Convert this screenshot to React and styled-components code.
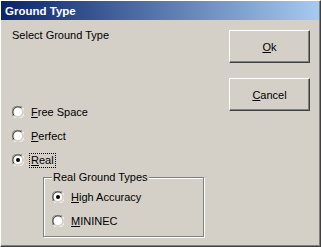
import React from 'react'
import styled, { createGlobalStyle } from 'styled-components'

const GlobalStyle = createGlobalStyle`
  html, body {
    margin: 0;
    padding: 0;
    background: #d4d0c8;
  }
  body {
    font-family: "Liberation Sans", Arial, sans-serif;
    font-size: 11px;
    color: #000;
  }
`

const Window = styled.div`
  width: 321px;
  height: 247px;
  box-sizing: border-box;
  background: #d4d0c8;
  border-top: 1px solid #ffffff;
  border-left: 1px solid #ffffff;
  border-right: 1px solid #404040;
  border-bottom: 1px solid #404040;
  box-shadow: inset -1px -1px 0 #808080;
  display: flex;
  flex-direction: column;
`

const TitleBar = styled.div`
  height: 19px;
  margin-right: 1px;
  background: linear-gradient(to right, #0a246a, #a6caf0);
  color: #fff;
  font-weight: bold;
  font-size: 11.5px;
  line-height: 20px;
  padding-left: 4px;
  flex-shrink: 0;
`

const Body = styled.div`
  flex: 1;
  display: flex;
  padding: 9px 10px 0 10px;
`

const LeftColumn = styled.div`
  flex: 1;
  display: flex;
  flex-direction: column;
`

const Prompt = styled.div`
  line-height: 13px;
  padding-left: 1px;
`

const RadioList = styled.div`
  margin-top: ${({ $top }) => $top}px;
  margin-left: ${({ $left }) => $left}px;
  display: flex;
  flex-direction: column;
`

const RadioRow = styled.label`
  height: 24px;
  display: flex;
  align-items: center;
`

const Label = styled.span`
  margin-left: 6px;
  line-height: 13px;
  padding: 0 1px;
  outline: ${({ $focus }) => ($focus ? '1px dotted #000' : 'none')};
`

const Group = styled.fieldset`
  margin: -1px 0 0 32px;
  width: 161px;
  box-sizing: border-box;
  padding: 1px 0 3px 8px;
  min-width: 0;
  border: 1px solid #808080;
  box-shadow: inset 1px 1px 0 #fff, 1px 1px 0 #fff;
`

const Legend = styled.legend`
  padding: 0 1px;
  line-height: 13px;
  background: #d4d0c8;
`

const RightColumn = styled.div`
  width: 81px;
  margin-top: 1px;
  display: flex;
  flex-direction: column;
  gap: 15px;
`

const Button = styled.button`
  width: 81px;
  height: 33px;
  box-sizing: border-box;
  background: #d4d0c8;
  font-family: "Liberation Sans", Arial, sans-serif;
  font-size: 11px;
  color: #000;
  padding: 0;
  border-top: 1px solid #ffffff;
  border-left: 1px solid #ffffff;
  border-right: 1px solid #404040;
  border-bottom: 1px solid #404040;
  box-shadow: inset -1px -1px 0 #808080;
`

const Radio = ({ checked }) => (
  <svg width="12" height="12" viewBox="0 0 12 12" style={{ flexShrink: 0 }}>
    <path d="M1.5 10.5 A6 6 0 0 1 10.5 1.5" stroke="#808080" strokeWidth="1" fill="none" />
    <path d="M10.5 1.5 A6 6 0 0 1 1.5 10.5" stroke="#ffffff" strokeWidth="1" fill="none" />
    <path d="M2.3 9.7 A5 5 0 0 1 9.7 2.3" stroke="#404040" strokeWidth="1" fill="none" />
    <path d="M9.7 2.3 A5 5 0 0 1 2.3 9.7" stroke="#d4d0c8" strokeWidth="1" fill="none" />
    <circle cx="6" cy="6" r="4" fill="#ffffff" />
    {checked && <circle cx="6" cy="6" r="2" fill="#000" />}
  </svg>
)

export default function App() {
  return (
    <>
      <GlobalStyle />
      <Window>
        <TitleBar>Ground Type</TitleBar>
        <Body>
          <LeftColumn>
            <Prompt>Select Ground Type</Prompt>
            <RadioList $top={58} $left={1}>
              <RadioRow>
                <Radio />
                <Label><u>F</u>ree Space</Label>
              </RadioRow>
              <RadioRow>
                <Radio />
                <Label><u>P</u>erfect</Label>
              </RadioRow>
              <RadioRow>
                <Radio checked />
                <Label $focus><u>R</u>eal</Label>
              </RadioRow>
            </RadioList>
            <Group>
              <Legend>Real Ground Types</Legend>
              <RadioRow>
                <Radio checked />
                <Label><u>H</u>igh Accuracy</Label>
              </RadioRow>
              <RadioRow>
                <Radio />
                <Label><u>M</u>ININEC</Label>
              </RadioRow>
            </Group>
          </LeftColumn>
          <RightColumn>
            <Button><u>O</u>k</Button>
            <Button><u>C</u>ancel</Button>
          </RightColumn>
        </Body>
      </Window>
    </>
  )
}
